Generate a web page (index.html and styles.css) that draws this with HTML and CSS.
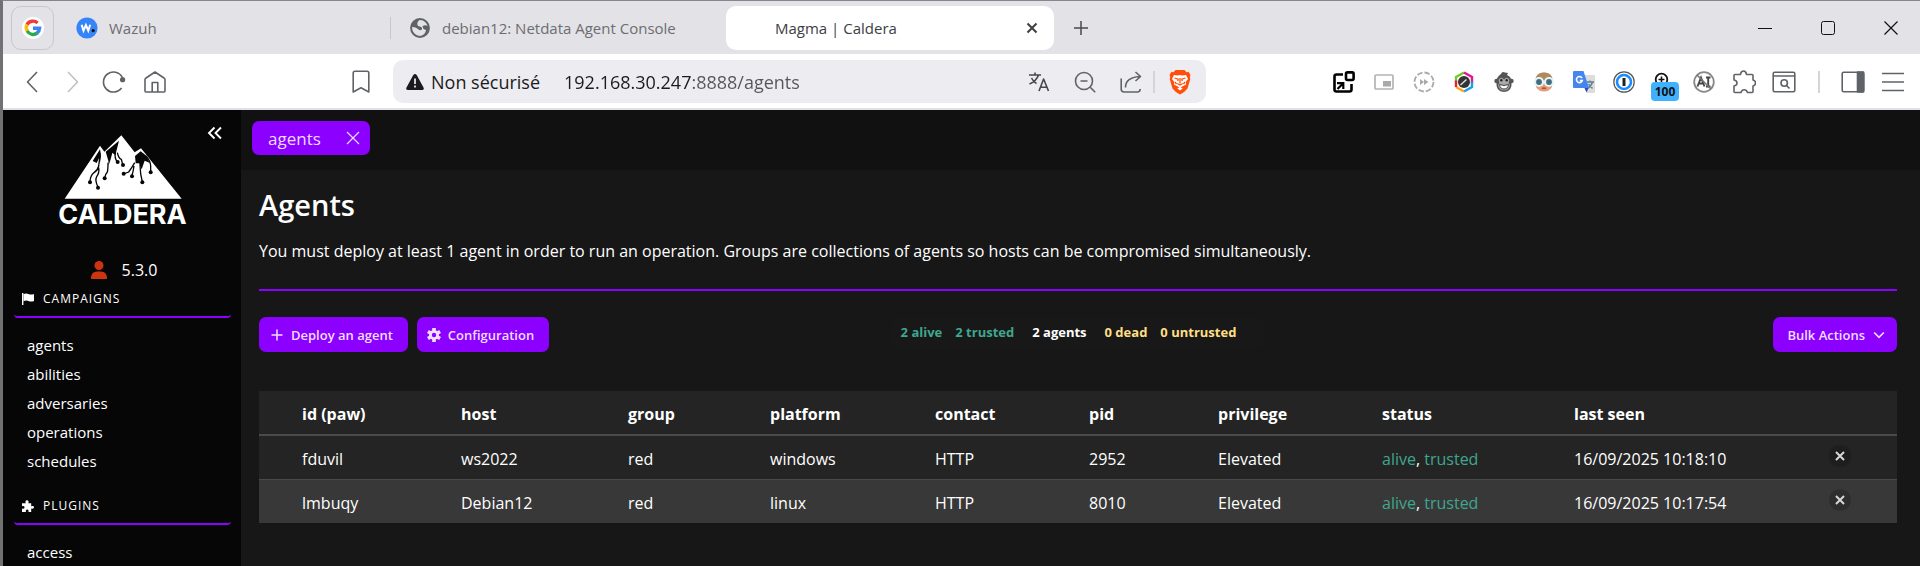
FILE: index.html
```html
<!DOCTYPE html>
<html lang="fr">
<head>
<meta charset="utf-8">
<title>Magma | Caldera</title>
<link rel="stylesheet" href="styles.css">
</head>
<body>
<header class="browser">
  <div class="tabstrip">
    <button class="pinned" aria-label="Google">
      <svg width="22" height="22" viewBox="0 0 22 22"><circle cx="11" cy="11" r="11" fill="#fff"/><g fill="none" stroke-width="3.4"><path d="M5 7.6A6.8 6.8 0 0 1 15.6 6" stroke="#f33b35"/><path d="M5.6 14.6A6.8 6.8 0 0 1 5 7.6" stroke="#fbbc05"/><path d="M15.4 15.9A6.8 6.8 0 0 1 5.2 14" stroke="#25ac4f"/><path d="M11 11.2h6.6A6.8 6.8 0 0 1 15 16.2" stroke="#3b83f6"/></g></svg>
    </button>
    <button class="tab">
      <svg width="22" height="22" viewBox="0 0 22 22"><circle cx="11" cy="11" r="10.6" fill="#3585f9"/><path d="M5.6 7.8l1.900 5.800 2.400-5.600 2.400 5.600 1.900-5.800" fill="none" stroke="#fff" stroke-width="2"/><circle cx="17.2" cy="13.6" r="1.6" fill="#111"/></svg>
      <span>Wazuh</span>
    </button>
    <i class="tab-sep"></i>
    <button class="tab tab-second">
      <svg width="20" height="20" viewBox="0 0 20 20"><circle cx="10" cy="10" r="8.900" fill="#e3e2e7" stroke="#5f6368" stroke-width="2"/><path d="M1.500 9Q2 2 10 1.200 7 3.500 7.200 6.500 7.500 8.500 10 8.500 12.500 9 12 11.500 9 13 8 11 5 8.500 1.500 9z" fill="#5f6368"/><path d="M18.500 8Q14 6.500 12.500 8.500 13 11.500 16 12 15.500 16 10.500 18.500 18.500 18 18.500 8z" fill="#5f6368"/><path d="M2 6Q4 1.500 9 1.200L7 5 7.500 9 4 9z" fill="#5f6368"/></svg>
      <span>debian12: Netdata Agent Console</span>
    </button>
    <div class="tab tab-active">
      <span>Magma | Caldera</span>
      <button class="icon" aria-label="Fermer l'onglet"><svg width="12" height="12" viewBox="0 0 12 12"><path d="M1.500 1.500l9 9M10.500 1.500l-9 9" stroke="#3c3e42" stroke-width="2" fill="none"/></svg></button>
    </div>
    <button class="icon new-tab" aria-label="Nouvel onglet"><svg width="16" height="16" viewBox="0 0 16 16"><path d="M8 1v14M1 8h14" stroke="#47494e" stroke-width="1.500"/></svg></button>
    <div class="window-controls">
      <button class="icon" aria-label="Réduire"><svg width="16" height="16"><path d="M1 8.500h14" stroke="#111"/></svg></button>
      <button class="icon" aria-label="Agrandir"><svg width="16" height="16"><rect x="1.500" y="1.500" width="13" height="13" rx="2" fill="none" stroke="#111"/></svg></button>
      <button class="icon" aria-label="Fermer"><svg width="16" height="16"><path d="M1.500 1.500l13 13M14.500 1.500l-13 13" stroke="#111" stroke-width="1.200"/></svg></button>
    </div>
  </div>
  <div class="toolbar">
    <div class="nav">
      <button class="icon" aria-label="Précédent"><svg class="line" width="14" height="24" viewBox="0 0 14 24"><path d="M12 2L2.500 12 12 22"/></svg></button>
      <button class="icon" aria-label="Suivant"><svg class="line pale" width="14" height="24" viewBox="0 0 14 24"><path d="M2 2l9.500 10L2 22"/></svg></button>
      <button class="icon" aria-label="Recharger"><svg class="line" width="24" height="24" viewBox="0 0 24 24"><path d="M19.500 18A10 10 0 1 1 20.300 7.300"/><circle cx="20.600" cy="9.700" r="2.600" fill="#5f6368" stroke="none"/></svg></button>
      <button class="icon" aria-label="Accueil"><svg class="line" width="24" height="24" viewBox="0 0 24 24"><path d="M2 9.500Q2 8.500 3 8L12 2l9 6q1 .5 1 1.500V21q0 1-1 1H3q-1 0-1-1zM9.200 22v-9.500h5.600V22"/></svg></button>
    </div>
    <button class="icon bookmark" aria-label="Favori"><svg class="line" width="18" height="24" viewBox="0 0 18 24"><path d="M1.200 3q0-1.800 1.800-1.800h12q1.800 0 1.800 1.800v19L9 17.800 1.200 22z"/></svg></button>
    <div class="omnibox">
      <svg width="18" height="18" viewBox="0 0 18 18"><path d="M7.300 2q1.700-2 3.400 0l6.800 12.500q1 2.300-1.500 2.500H2q-2.500-.2-1.500-2.500z" fill="#1b1a20"/><path d="M9 5.500v5.500M9 12.500v2" stroke="#fff" stroke-width="1.600"/></svg>
      <label class="insecure" for="url">Non sécurisé</label>
      <input id="url" class="url" type="text" value="192.168.30.247:8888/agents">
      <button class="icon" aria-label="Traduire"><svg class="line" width="22" height="22" viewBox="0 0 22 22"><path d="M1 4h12M7 1.500V4M10.500 4q-2 6-9 9M3.500 7q2 4 5 5.500M11 20l4.600-12L20.500 20M12.500 16.200h6.300" stroke="#47474f"/></svg></button>
      <button class="icon" aria-label="Zoom"><svg class="line" width="22" height="22" viewBox="0 0 22 22"><circle cx="10" cy="10" r="8.500"/><path d="M16.200 16.200l5 5M6.500 10h7"/></svg></button>
      <button class="icon" aria-label="Partager"><svg class="line" width="22" height="22" viewBox="0 0 22 22"><path d="M1.200 7.500V18q0 3 3 3h13q3 0 3-3M5.500 16.500q0-10 14-11M15.500 1l5 4.500-5 4.500"/></svg></button>
      <i class="bar-sep"></i>
      <button class="icon" aria-label="Brave"><svg width="22" height="26" viewBox="0 0 22 26"><path d="M6.500 1h9l2 2.200 2-.4L21.500 6l-.7 2 .5 2-2.800 9.500Q16 23 11 25.500 6 23 3.500 19.500L.7 10l.5-2-.7-2 2-3.200 2 .4z" fill="#ff4f0a"/><path d="M5 6l3.500.6L11 6l2.500.6L17 6l2 4-2.300 3 .4 2.500-3 1.500L11 19l-3.100-2-3-1.500.4-2.500L3 10z" fill="#fff"/><path d="M5.500 9l3.700 1.200-.4 2M16.500 9l-3.700 1.200.4 2M11 9v5.500M8.300 14.500l2.700 1.600 2.700-1.600M6 13l1.500 2M16 13l-1.500 2" stroke="#ff4f0a" stroke-width="1.300" fill="none"/><path d="M8.300 19.500L11 18l2.700 1.500L11 21.500z" fill="#fff"/></svg></button>
    </div>
    <div class="extensions">
      <button class="icon" aria-label="Fenêtre"><svg width="22" height="22" viewBox="0 0 22 22"><g fill="none" stroke="#000" stroke-width="2.600"><path d="M10 3.500H3.500q-2 0-2 2v13q0 2 2 2h13q2 0 2-2V13"/><rect x="13" y="1.400" width="7.600" height="7.600" rx="1.500"/><path d="M4.500 18l5.500-5.500M4 12.200h6.300v5.800" stroke-width="2.200"/></g></svg></button>
      <button class="icon" aria-label="Image dans l'image"><svg width="20" height="16" viewBox="0 0 20 16"><rect x="1" y="1" width="18" height="14" rx="1" fill="none" stroke="#b4b4b4" stroke-width="1.700"/><rect x="9" y="7" width="8" height="5.500" fill="#aaa"/></svg></button>
      <button class="icon" aria-label="Vitesse"><svg width="22" height="22" viewBox="0 0 22 22"><circle cx="11" cy="11" r="9.500" fill="none" stroke="#aaa" stroke-width="1.800" stroke-dasharray="5.500 2"/><path d="M7 8l4 3-4 3zM11 8l4.500 3-4.500 3z" fill="#aaa"/></svg></button>
      <button class="icon" aria-label="Couleurs"><svg width="20" height="22" viewBox="0 0 20 22"><g fill="none" stroke-width="2.400"><path d="M2 12V6l8-4.500" stroke="#73c92d"/><path d="M10 1.500L18 6v6" stroke="#e6138c"/><path d="M18 10.500V16l-8 4.500" stroke="#18a0ea"/><path d="M10 20.500L2 16" stroke="#ffa416"/><path d="M2 9.500V16" stroke="#e42436"/></g><circle cx="10" cy="11" r="6" fill="#333"/><path d="M6.500 14l6-5.500" stroke="#ddd" stroke-width="1.500"/></svg></button>
      <button class="icon" aria-label="Violentmonkey"><svg width="20" height="22" viewBox="0 0 20 22"><circle cx="2.600" cy="10" r="2.300" fill="#555"/><circle cx="17.400" cy="10" r="2.300" fill="#555"/><path d="M7 3Q8 0 11 1.500L14 2l-1 2q5 2 4.500 7.500 1 9-7.500 9.500-8.500-.5-7.500-9.500Q2 6 7 3z" fill="#555"/><path d="M10 8.500Q7 5 4.800 8.500q-.3 2 .7 3-1.800 2-1 4.300Q6 19.500 10 19.500t5.500-3.700q.8-2.300-1-4.300 1-1 .7-3Q13 5 10 8.500z" fill="#aaa"/><circle cx="7.300" cy="9.200" r="1.200" fill="#222"/><circle cx="12.700" cy="9.200" r="1.200" fill="#222"/><path d="M5.500 13.500q4.500 2 9 0-.5 4.500-4.500 4.500t-4.500-4.500z" fill="#fff" stroke="#444"/></svg></button>
      <button class="icon" aria-label="Profil"><svg width="22" height="22" viewBox="0 0 22 22"><path d="M2.500 9Q3 1.500 11 1.500T19.500 9l-.5 7q-3 4.500-8 4.500T3 16z" fill="#e79c75"/><path d="M2.500 9Q3 1.500 11 1.500T19.500 9z" fill="#b08a5c"/><circle cx="6" cy="11" r="4" fill="#426d80" stroke="#e2f5fa" stroke-width="2.200"/><circle cx="16" cy="11" r="4" fill="#426d80" stroke="#e2f5fa" stroke-width="2.200"/><path d="M9 17.500q2-1 4 0" stroke="#a74c3c" stroke-width="1.400" fill="none"/></svg></button>
      <button class="icon" aria-label="Google Traduction"><svg width="22" height="22" viewBox="0 0 22 22"><path d="M9 4h12q1 0 1 1v16q0 1-1 1h-7z" fill="#dcdcdc"/><path d="M14 11h7M17 9.500V11M19.500 11q-1 4-5 6.500M15.500 13l4 4.500" stroke="#5d7f91" stroke-width="1.300" fill="none"/><path d="M11 16h5l-2.500 5.500z" fill="#3446bd"/><path d="M1 0h9.500L16 17H1q-1 0-1-1V1q0-1 1-1z" fill="#4585f0"/><path d="M9 7A3 3 0 1 0 9.300 9.500H6.800" stroke="#fff" stroke-width="1.600" fill="none"/></svg></button>
      <button class="icon" aria-label="1Password"><svg width="22" height="22" viewBox="0 0 22 22"><circle cx="11" cy="11" r="10.200" fill="#fff" stroke="#555" stroke-width="1.200"/><circle cx="11" cy="11" r="7" fill="#fff" stroke="#1a8cff" stroke-width="2.600"/><path d="M11 7v8" stroke="#222" stroke-width="3"/></svg></button>
      <button class="icon badged" aria-label="Zoom 100"><svg width="22" height="22" viewBox="0 0 22 22"><circle cx="8.500" cy="8.500" r="5.800" fill="none" stroke="#111" stroke-width="1.800"/><path d="M8.500 5.500v6M5.500 8.500h6" stroke="#111" stroke-width="1.600"/></svg><span class="badge">100</span></button>
      <button class="icon" aria-label="Bloquer IA"><svg width="22" height="22" viewBox="0 0 22 22"><circle cx="11" cy="11" r="9.800" fill="none" stroke="#888" stroke-width="1.800"/><path d="M4.500 15.500L8 6.500l3.500 9M5.500 12.500h5M13 6.500h4.500M15.200 6.500v9M13 15.500h4.500" stroke="#444" stroke-width="1.900" fill="none"/><path d="M4 4l14 14" stroke="#777" stroke-width="1.600"/></svg></button>
      <button class="icon" aria-label="Extensions"><svg class="line" width="24" height="24" viewBox="0 0 24 24"><path d="M3 4.500h5.500q.5-3.500 3-3.500t3 3.500H20q1 0 1 1V10q2.500.5 2.500 3T21 16v5.500q0 1-1 1h-4.500q-1-2.700-3.300-2.700T9 22.500H3q-1 0-1-1V16q3-.5 3-3t-3-3V5.500q0-1 1-1z"/></svg></button>
      <button class="icon" aria-label="Rechercher"><svg class="line" width="24" height="22" viewBox="0 0 24 22"><rect x="1.200" y="1.200" width="21.600" height="19.600" rx="1.500"/><path d="M1.200 5h21.600M14.500 14.500l3 3"/><circle cx="12.200" cy="12" r="3.200"/></svg></button>
      <i class="bar-sep"></i>
      <button class="icon" aria-label="Panneau latéral"><svg class="line" width="24" height="22" viewBox="0 0 24 22"><rect x="1.200" y="1.200" width="21.600" height="19.600" rx="1.500"/><path d="M16.500 1h6v20h-6z" fill="#5f6368"/></svg></button>
      <button class="icon" aria-label="Menu"><svg class="line" width="24" height="22" viewBox="0 0 24 22"><path d="M1 2.500h22M1 11h22M1 19.500h22"/></svg></button>
    </div>
  </div>
</header>
<div class="app">
  <aside class="sidebar">
    <button class="icon collapse" aria-label="Réduire le menu"><svg width="16" height="16" viewBox="0 0 16 16"><path d="M7.500 2.500L2 8l5.500 5.500M14 2.500L8.500 8l5.500 5.500" fill="none" stroke="#fff" stroke-width="1.900"/></svg></button>
    <div class="logo">
      <svg width="118" height="64" viewBox="190 107 354 192"><path d="M192 298L298 139l13 18 51-49 40 51 19-12 122 151z" fill="#fff"/><g fill="#060606"><path d="M298 150l-22 35 12 6 7-14 3 14 3-25z"/><path d="M355 124l-40 33 8 27 1 14 6-18 5-20 9 8z"/><path d="M420 156l-17 14 2 22 10 0 8 18 9-26 14 6-8-20z"/></g><g fill="none" stroke="#060606" stroke-width="4"><path d="M298 170l-4 30q-3 14-14 20-10 6-12 26M294 205q3 15-6 27-6 12 4 31M322 190q0 20-2 28-6 6-8 18M344 160q-3 15 5 27M350 160q4 18 12 20l4 15M402 190q-8 15-18 28l-16 6M400 200q-2 16-6 28M418 196l2 28 5 24M436 170q14 16 14 30v16"/></g><g fill="#060606"><circle cx="268" cy="249" r="6"/><circle cx="292" cy="265" r="6"/><circle cx="312" cy="237" r="6"/><circle cx="351" cy="188" r="6"/><circle cx="367" cy="197" r="6"/><circle cx="369" cy="223" r="6"/><circle cx="394" cy="231" r="6"/><circle cx="425" cy="249" r="6"/><circle cx="450" cy="219" r="6"/></g></svg>
      <span class="wordmark">CALDERA</span>
    </div>
    <div class="version">
      <svg width="16" height="18" viewBox="0 0 16 18"><circle cx="8" cy="4.500" r="4.500" fill="#cc3311"/><path d="M0 18v-1.500Q.5 10.500 6 10.500h4q5.500 0 6 6V18z" fill="#cc3311"/></svg>
      <span>5.3.0</span>
    </div>
    <h2 class="menu-label"><svg width="12" height="12" viewBox="0 0 12 12"><path d="M.7 0v12" stroke="#fff" stroke-width="1.400"/><path d="M1.500 1q2.500-1 5 0t5.500 0v7q-3 1-5.500 0t-5 .3z" fill="#fff"/></svg>CAMPAIGNS</h2>
    <ul class="menu">
      <li><a href="#agents">agents</a></li>
      <li><a href="#abilities">abilities</a></li>
      <li><a href="#adversaries">adversaries</a></li>
      <li><a href="#operations">operations</a></li>
      <li><a href="#schedules">schedules</a></li>
    </ul>
    <h2 class="menu-label"><svg width="12" height="12" viewBox="0 0 12 12"><path d="M0 3.300h3.700Q2.800.2 5 .2T6.400 3.300h2.800v2.900q2.800-.8 2.800 1.100T9.200 8.500V12H6.400q.7-2.500-1.200-2.500T4 12H0V8.500q2.500.7 2.500-1.100T0 6.200z" fill="#fff"/></svg>PLUGINS</h2>
    <ul class="menu">
      <li><a href="#access">access</a></li>
    </ul>
  </aside>
  <main class="main">
    <div class="page-tabs">
      <div class="page-tab"><a href="#agents">agents</a><button class="icon" aria-label="Close agents"><svg width="14" height="14" viewBox="0 0 14 14"><path d="M1 1l12 12M13 1L1 13" stroke="#efdcff" stroke-width="1.200"/></svg></button></div>
    </div>
    <section class="content">
      <h1>Agents</h1>
      <p class="intro">You must deploy at least 1 agent in order to run an operation. Groups are collections of agents so hosts can be compromised simultaneously.</p>
      <hr>
      <div class="actions">
        <div class="buttons">
          <button class="btn"><svg width="12" height="12" viewBox="0 0 12 12"><path d="M6 .5v11M.5 6h11" stroke="#f1dfff" stroke-width="1.500"/></svg>Deploy an agent</button>
          <button class="btn btn-config"><svg width="14" height="14" viewBox="0 0 14 14"><g stroke="#f1dfff" stroke-width="3.600"><path d="M7 0v14M.9 3.500l12.200 7M.9 10.500l12.200-7"/></g><circle cx="7" cy="7" r="5" fill="#f1dfff"/><circle cx="7" cy="7" r="2.200" fill="#8b00ff"/></svg>Configuration</button>
        </div>
        <div class="stats">
          <span class="good">2 alive</span><span class="good">2 trusted</span><span class="total">2 agents</span><span class="warn">0 dead</span><span class="warn">0 untrusted</span>
        </div>
        <button class="btn bulk">Bulk Actions<svg width="12" height="8" viewBox="0 0 12 8"><path d="M1.200 1.500L6 6.300l4.800-4.800" fill="none" stroke="#f1dfff" stroke-width="1.700"/></svg></button>
      </div>
      <table class="agents">
        <colgroup><col class="c-id"><col class="c-host"><col class="c-group"><col class="c-platform"><col class="c-contact"><col class="c-pid"><col class="c-privilege"><col class="c-status"><col class="c-seen"><col class="c-remove"></colgroup>
        <thead><tr><th>id (paw)</th><th>host</th><th>group</th><th>platform</th><th>contact</th><th>pid</th><th>privilege</th><th>status</th><th>last seen</th><th></th></tr></thead>
        <tbody>
          <tr><td>fduvil</td><td>ws2022</td><td>red</td><td>windows</td><td>HTTP</td><td>2952</td><td>Elevated</td><td><span class="good">alive</span>, <span class="good">trusted</span></td><td>16/09/2025 10:18:10</td><td><button class="remove" aria-label="Remove fduvil"><svg width="10" height="10" viewBox="0 0 10 10"><path d="M1 1l8 8M9 1L1 9" stroke="#d8d8d8" stroke-width="2"/></svg></button></td></tr>
          <tr><td>lmbuqy</td><td>Debian12</td><td>red</td><td>linux</td><td>HTTP</td><td>8010</td><td>Elevated</td><td><span class="good">alive</span>, <span class="good">trusted</span></td><td>16/09/2025 10:17:54</td><td><button class="remove" aria-label="Remove lmbuqy"><svg width="10" height="10" viewBox="0 0 10 10"><path d="M1 1l8 8M9 1L1 9" stroke="#d8d8d8" stroke-width="2"/></svg></button></td></tr>
        </tbody>
      </table>
    </section>
  </main>
</div>
</body>
</html>
```
FILE: styles.css
```css
* { box-sizing: border-box; }
body {
  margin: 0;
  height: 100vh;
  display: flex;
  flex-direction: column;
  border-top: 1px solid #84878f;
  border-left: 3px solid #6f7173;
  background: #171717;
  color: #fff;
  font-family: "Open Sans", "Noto Sans", sans-serif;
  font-size: 16px;
}
button { border: 0; padding: 0; background: none; font: inherit; color: inherit; }
svg { display: block; flex: none; }
a { color: inherit; text-decoration: none; }
h1, h2, p, ul { margin: 0; padding: 0; }
.icon { display: flex; align-items: center; justify-content: center; flex: none; }
.line { fill: none; stroke: #5f6368; stroke-width: 1.6; stroke-linejoin: round; }
.pale { stroke: #bfc1c4; }

/* Browser tabs */
.browser { flex: none; }
.tabstrip { display: flex; align-items: center; height: 53px; padding-left: 8px; background: #e3e2e7; color: #6c6d72; font-size: 15px; }
.pinned { display: flex; align-items: center; justify-content: center; width: 43px; height: 44px; border: 1px solid #c8c8cc; border-radius: 10px; }
.tab { display: flex; align-items: center; width: 328px; height: 44px; padding-left: 22px; gap: 11px; }
.tab-sep { width: 1px; height: 22px; margin-left: 8px; background: #c8c8cd; }
.tab-second { width: 335px; padding-left: 19px; gap: 12px; }
.tab-active { padding: 0 16px 0 49px; border-radius: 10px; background: #fff; color: #3c3e42; justify-content: space-between; }
.new-tab { margin-left: 19px; }
.window-controls { display: flex; gap: 47px; margin-left: auto; padding-right: 21px; }

/* Browser toolbar */
.toolbar { display: flex; align-items: center; height: 56px; padding-top: 1px; border-bottom: 2px solid #e0e0e6; background: #fff; }
.nav { display: flex; gap: 17px; padding-left: 17px; width: 349px; }
.nav .icon { min-width: 24px; }
.bookmark { margin-right: 23px; }
.omnibox { display: flex; align-items: center; gap: 24px; flex: 0 1 813px; height: 43px; padding: 0 15px 0 13px; border-radius: 10px; background: #edecf1; color: #1b1a20; font-size: 18px; }
.insecure { margin-left: -17px; white-space: nowrap; }
.url {
  flex: 1;
  min-width: 0;
  padding: 0;
  border: 0;
  font: inherit;
  color: #1b1a20;
  background: linear-gradient(90deg, #1b1a20 128px, #54545c 128px);
  -webkit-background-clip: text;
  background-clip: text;
  -webkit-text-fill-color: transparent;
}
.bar-sep { width: 2px; height: 22px; background: #d4d4da; }
.omnibox .bar-sep { margin: 0 -10px 0 -13px; }
.extensions { display: flex; align-items: center; gap: 16px; margin-left: auto; padding-right: 15px; }
.extensions .icon { min-width: 24px; }
.extensions .bar-sep { margin: 0 5px 0 6px; }
.badged { position: relative; }
.badge { position: absolute; top: 11px; left: -1px; width: 28px; border-radius: 4px; background: #3fb1ff; color: #111; font-size: 12px; font-weight: 700; line-height: 19px; text-align: center; }

/* Application */
.app { display: flex; flex: 1; min-height: 0; }
.sidebar { position: relative; width: 238px; flex: none; padding: 25px 10px 0 11px; overflow-y: auto; scrollbar-width: none; background: #060606; }
.collapse { position: absolute; top: 15px; right: 18px; }
.logo { display: flex; flex-direction: column; align-items: center; }
.wordmark { font-family: Inter, sans-serif; font-size: 27px; font-weight: 700; line-height: 32px; }
.version { display: flex; align-items: center; justify-content: center; gap: 15px; height: 24px; margin-top: 27px; padding-left: 3px; font-size: 16px; }
.menu-label { display: flex; align-items: center; gap: 9px; padding: 0 8px 7px; margin-top: 7px; border-bottom: 2px solid #8b00ff; border-radius: 4px; font-size: 12px; font-weight: 400; line-height: 20px; letter-spacing: 1px; }
.menu { padding: 13px 0 13px 13px; list-style: none; font-size: 15px; line-height: 29px; }
.main { flex: 1; min-width: 0; overflow-y: auto; }
.page-tabs { height: 60px; padding: 11px; background: #111; }
.page-tab { display: flex; align-items: center; justify-content: space-between; width: 118px; height: 34px; padding: 0 10px 0 16px; border-radius: 7px; background: #8b00ff; color: #efdcff; font-size: 17px; }
.content { padding: 17px 23px 16px 18px; }
h1 { font-size: 29px; font-weight: 600; line-height: 36px; }
.intro { margin-top: 16px; font-size: 16px; line-height: 24px; }
hr { height: 2px; margin: 26px 0; border: 0; background: #8b00ff; }
.actions { display: grid; grid-template-columns: 1fr auto 1fr; align-items: start; }
.buttons { display: flex; gap: 9px; }
.btn { display: flex; align-items: center; gap: 8px; height: 35px; padding: 0 15px 0 12px; border-radius: 7px; background: #8b00ff; color: #f1dfff; font-size: 13px; font-weight: 600; white-space: nowrap; }
.btn-config { gap: 7px; padding-left: 10px; }
.bulk { justify-self: end; padding: 0 12px 0 14px; }
.stats { display: flex; gap: 13px; padding: 0 28px 0 9px; border-radius: 7px; background: #181818; font-size: 13px; font-weight: 700; line-height: 31px; }
.total { margin: 0 5px; }
.good { color: #3fa78f; }
.warn { color: #ffdf85; }

.agents { width: 100%; margin-top: 39px; border-collapse: collapse; table-layout: fixed; background: #242424; font-size: 16px; line-height: 24px; text-align: left; }
.agents th { height: 44px; padding: 2px 0 0 14px; border-bottom: 2px solid #4a4a4a; font-weight: 700; }
.agents td { height: 44px; padding: 4px 0 0 14px; }
.agents th:first-child, .agents td:first-child { padding-left: 43px; }
.agents tbody tr + tr { border-top: 1px solid #4a4a4a; background: #383838; }
.c-id { width: 188px; }
.c-host { width: 167px; }
.c-group { width: 142px; }
.c-platform { width: 165px; }
.c-contact { width: 154px; }
.c-pid { width: 129px; }
.c-privilege { width: 164px; }
.c-status { width: 192px; }
.c-seen { width: 255px; }
.c-remove { width: 82px; }
.remove { display: flex; align-items: center; justify-content: center; width: 22px; height: 22px; margin-bottom: 6px; border-radius: 50%; background: rgba(10, 10, 10, .2); }
```
